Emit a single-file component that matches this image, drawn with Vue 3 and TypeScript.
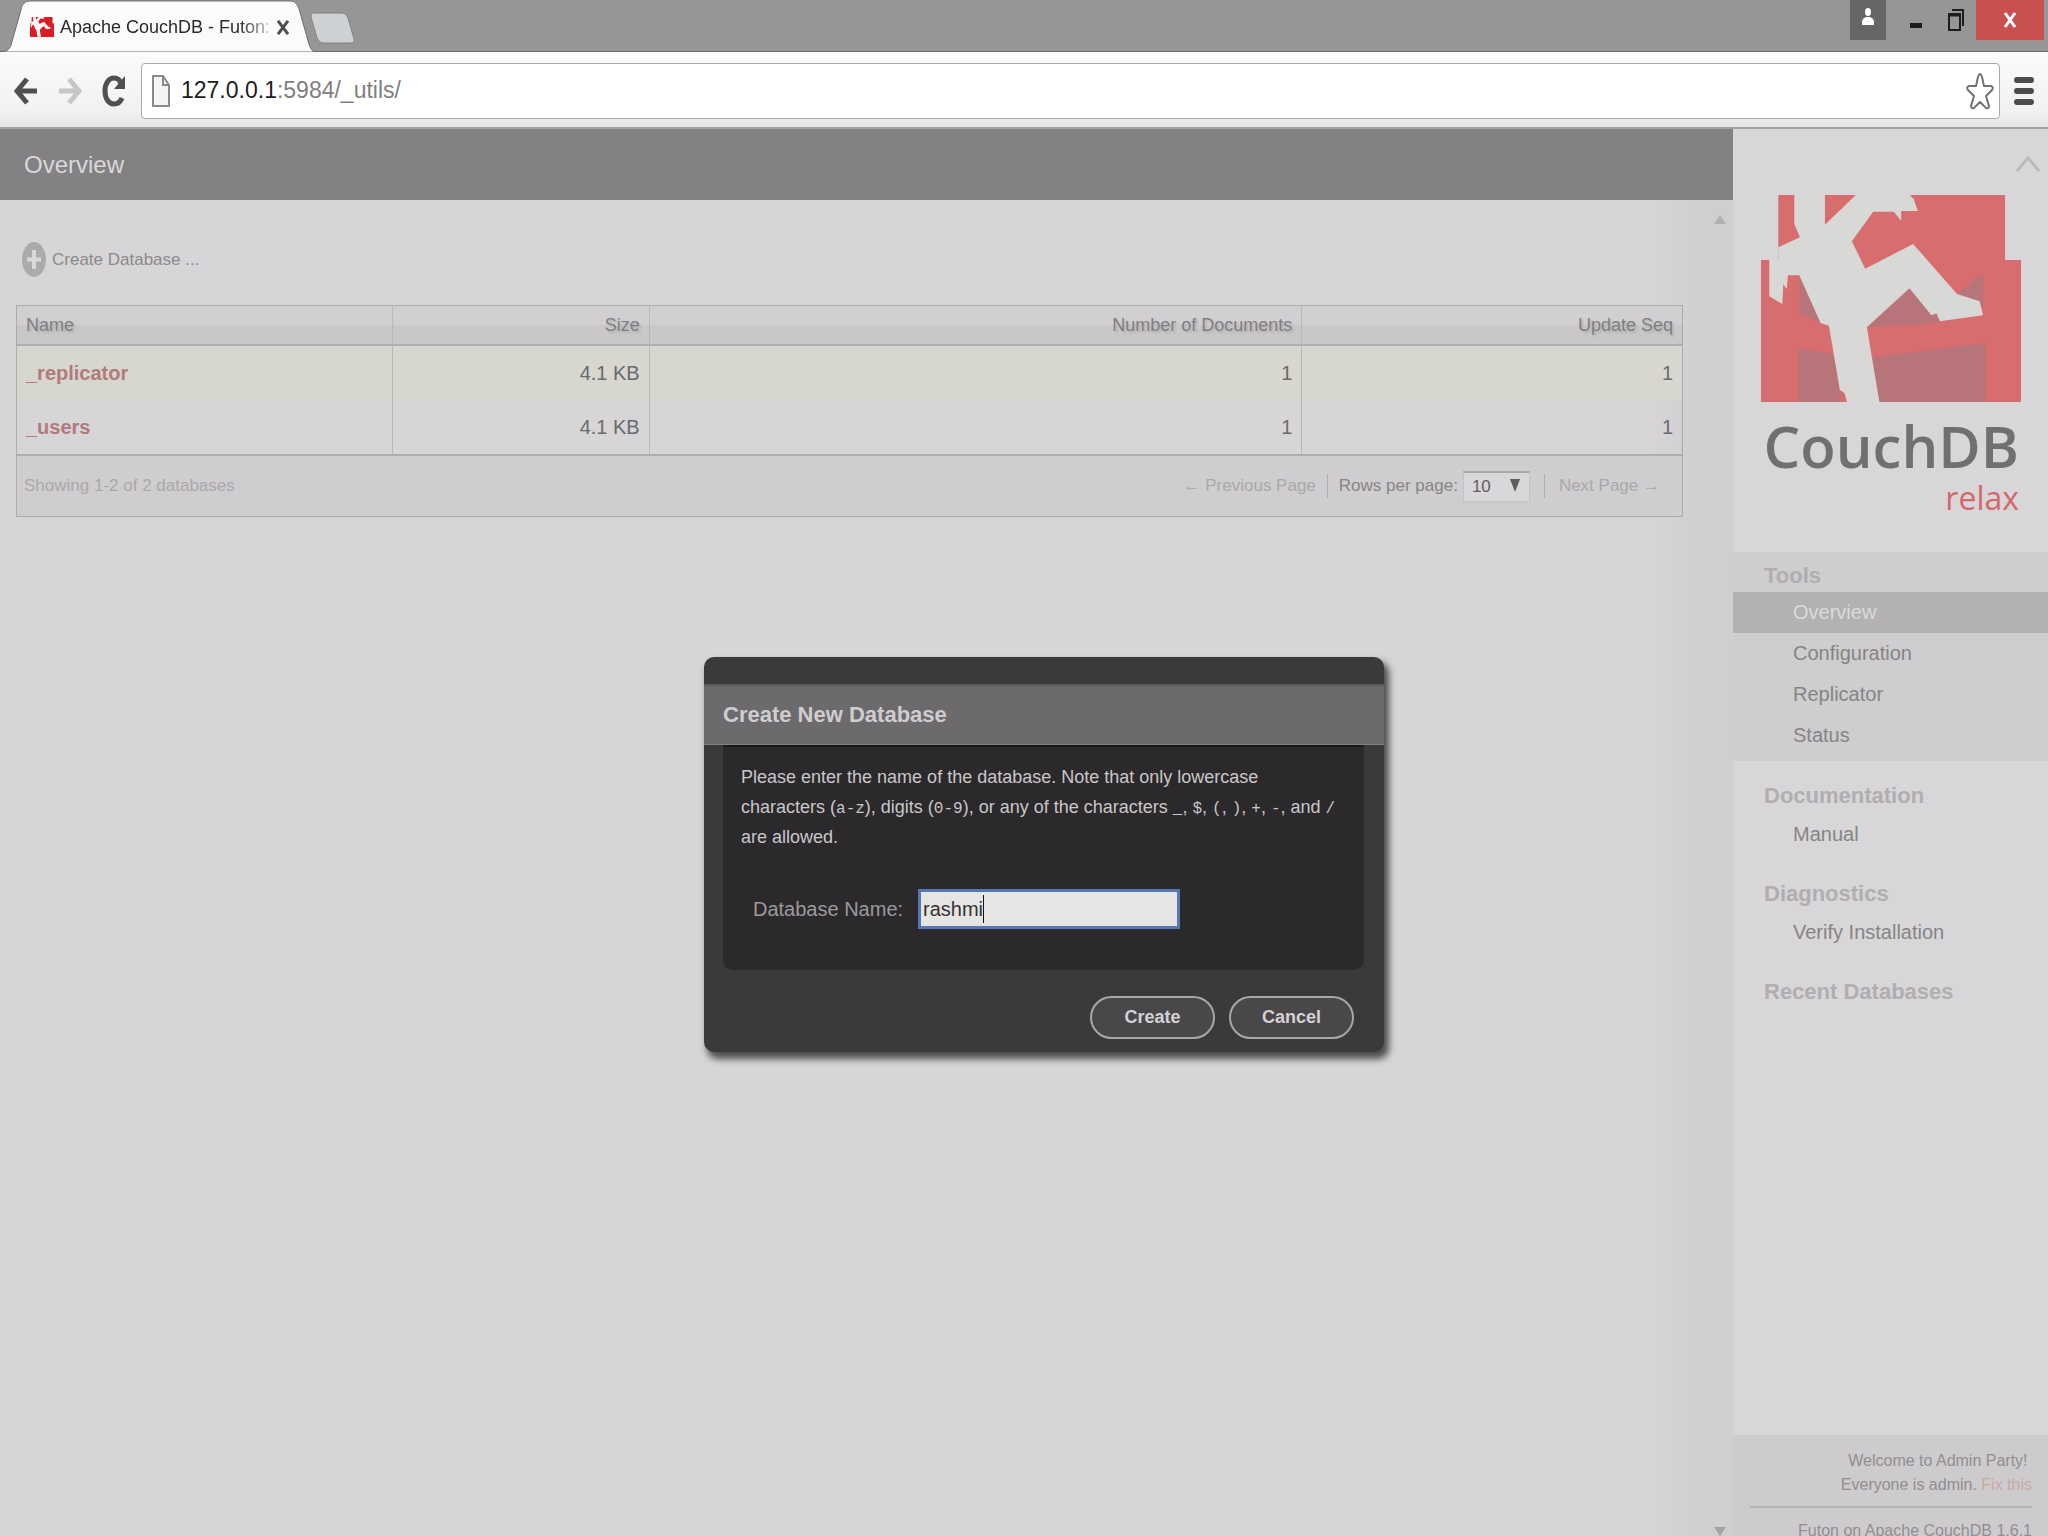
<script setup lang="ts">
import { ref } from 'vue'

interface Database {
  name: string
  size: string
  docs: number
  seq: number
}

interface NavSection {
  title: string
  items: string[]
  tools?: boolean
}

const databases: Database[] = [
  { name: '_replicator', size: '4.1 KB', docs: 1, seq: 1 },
  { name: '_users', size: '4.1 KB', docs: 1, seq: 1 },
]

const sections: NavSection[] = [
  { title: 'Tools', items: ['Overview', 'Configuration', 'Replicator', 'Status'], tools: true },
  { title: 'Documentation', items: ['Manual'] },
  { title: 'Diagnostics', items: ['Verify Installation'] },
  { title: 'Recent Databases', items: [] },
]

const active = 'Overview'
const dbName = ref('rashmi')
const perPage = ref('10')

const blockShape = 'M175 163H856V358H904V784H123V358H175Z'
const figureShape =
  'M223 160V250L240 290L175 320V358H148V467L187 490L190 430L200 446L204 404H238L302 547L327 555L360 748L374 758L382 786H479L441 560L569 443L635 524L650 518L660 542L790 524L780 482L712 460L580 310L436 384L396 302L460 213H522L544 240V211H594L582 176L568 160H411L315 252V160Z'
const couchShape =
  'M238 404L302 547L238 515ZM235 622L340 640L366 784H235ZM569 443L441 560L600 550L665 542ZM712 460L790 396V500ZM450 652L600 632L797 608V784H470Z'
</script>

<template>
  <div class="window">
    <header class="tabstrip">
      <div class="tab">
        <svg class="tab-shape" viewBox="0 0 316 53" preserveAspectRatio="none" aria-hidden="true">
          <path d="M0 53C6 53 9 51 11 46L21 10C22 4 25 1 30 1H290C295 1 297 4 299 9L309 45C311 51 313 53 316 53Z" fill="#fbfbfb" stroke="#6c6c6c" stroke-width="1" />
        </svg>
        <svg class="favicon" viewBox="123 163 781 621" preserveAspectRatio="none" aria-hidden="true">
          <path :d="blockShape" fill="#dc1c24" />
          <path :d="figureShape" fill="#fbfbfb" />
        </svg>
        <span class="tab-title">Apache CouchDB - Futon:</span>
        <button class="tab-close" type="button" aria-label="Close tab">
          <svg viewBox="0 0 12 16" preserveAspectRatio="none"><path d="M1 1L11 15M11 1L1 15" stroke="#4d4d4d" stroke-width="3" /></svg>
        </button>
      </div>
      <button class="new-tab" type="button" aria-label="New tab">
        <svg viewBox="0 0 46 32"><path d="M3 1H31Q36 1 38 6L44 27Q45 31 41 31H13Q9 31 7 26L1 5Q0 1 3 1Z" fill="#cdd1d4" stroke="#808284" /></svg>
      </button>
      <div class="controls">
        <button class="user" type="button" aria-label="User">
          <svg width="14" height="18" viewBox="0 0 14 18"><ellipse cx="7" cy="4" rx="3" ry="4" fill="#fff" /><path d="M1 17V13Q2 10 5 9H9Q12 10 13 13V17Z" fill="#fff" /></svg>
        </button>
        <button class="ctl" type="button" aria-label="Minimize">
          <svg width="14" height="24" viewBox="0 0 14 24"><rect x="1" y="15" width="12" height="5" fill="#1c1c1c" /></svg>
        </button>
        <button class="ctl" type="button" aria-label="Restore">
          <svg width="16" height="24" viewBox="0 0 16 24"><path d="M4 2H15V18" fill="none" stroke="#1c1c1c" stroke-width="2" /><rect x="1" y="6" width="11" height="16" fill="none" stroke="#1c1c1c" stroke-width="2" /><path d="M1 7H12" stroke="#1c1c1c" stroke-width="3" /></svg>
        </button>
        <button class="close" type="button" aria-label="Close">
          <svg width="14" height="16" viewBox="0 0 14 16"><path d="M2 1L12 15M12 1L2 15" stroke="#fff" stroke-width="3" /></svg>
        </button>
      </div>
    </header>

    <div class="toolbar">
      <button class="nav" type="button" aria-label="Back">
        <svg width="24" height="28" viewBox="0 0 24 28"><path d="M13 2L3 14L13 26M3 14H23" fill="none" stroke="#4f4f4f" stroke-width="5" /></svg>
      </button>
      <button class="nav" type="button" aria-label="Forward">
        <svg width="24" height="28" viewBox="0 0 24 28"><path d="M11 2L21 14L11 26M21 14H1" fill="none" stroke="#c6c6c6" stroke-width="5" /></svg>
      </button>
      <button class="nav" type="button" aria-label="Reload">
        <svg width="24" height="32" viewBox="0 0 24 32"><path d="M20 23C18 28 15 29 12 29C7 29 3 24 3 16C3 8 7 3 12 3C15 3 18 5 19 9" fill="none" stroke="#4f4f4f" stroke-width="5" /><path d="M23 1V14H12Z" fill="#4f4f4f" /></svg>
      </button>
      <div class="omnibox">
        <svg width="18" height="32" viewBox="0 0 18 32" aria-hidden="true"><path d="M1 1H11L17 10V31H1Z" fill="#f4f4f4" stroke="#8a8a8a" stroke-width="2" /><path d="M11 1V10H17" fill="none" stroke="#8a8a8a" stroke-width="2" /></svg>
        <span class="url">127.0.0.1<span class="path">:5984/_utils/</span></span>
        <button class="star" type="button" aria-label="Bookmark">
          <svg width="28" height="38" viewBox="0 0 28 38"><path d="M14 2Q15 2 16 5L18 14L25 14Q28 15 26 18L20 24L23 34Q23 37 20 36L14 30L8 36Q5 37 5 34L8 24L2 18Q0 15 3 14L10 14L12 5Q13 2 14 2Z" fill="#fff" stroke="#727272" stroke-width="2" /></svg>
        </button>
      </div>
      <button class="menu" type="button" aria-label="Menu">
        <svg width="20" height="28" viewBox="0 0 20 28"><path d="M3 3H17M3 14H17M3 25H17" stroke="#4c4c4c" stroke-width="6" stroke-linecap="round" /></svg>
      </button>
    </div>

    <div class="page">
      <main class="content">
        <h1>Overview</h1>
        <div class="scroll">
          <div class="body">
            <button class="create" type="button">
              <svg width="24" height="35" viewBox="0 0 24 35" aria-hidden="true"><ellipse cx="12" cy="17.500" rx="12" ry="17.500" fill="#acaaac" /><path d="M12 8V27M5 17.500H19" stroke="#dad8da" stroke-width="4" /></svg>
              Create Database ...
            </button>
            <table>
              <thead>
                <tr>
                  <th class="c-name">Name</th>
                  <th class="c-size">Size</th>
                  <th class="c-docs">Number of Documents</th>
                  <th class="c-seq">Update Seq</th>
                </tr>
              </thead>
              <tbody>
                <tr v-for="db in databases" :key="db.name">
                  <td><a href="#">{{ db.name }}</a></td>
                  <td>{{ db.size }}</td>
                  <td>{{ db.docs }}</td>
                  <td>{{ db.seq }}</td>
                </tr>
              </tbody>
              <tfoot>
                <tr>
                  <td colspan="4">
                    <div class="foot">
                      <span class="showing">Showing 1-2 of 2 databases</span>
                      <span class="off">← Previous Page</span>
                      <span class="bar"></span>
                      <label for="per-page">Rows per page:</label>
                      <span class="select">
                        <select id="per-page" v-model="perPage">
                          <option>10</option>
                          <option>25</option>
                          <option>50</option>
                        </select>
                        <svg width="10" height="13" viewBox="0 0 10 13" aria-hidden="true"><path d="M0 0H10L5 13Z" fill="#5e5c5e" /></svg>
                      </span>
                      <span class="bar wide"></span>
                      <span class="off">Next Page →</span>
                    </div>
                  </td>
                </tr>
              </tfoot>
            </table>
          </div>
          <div class="scrollbar" aria-hidden="true">
            <svg width="12" height="9" viewBox="0 0 12 9"><path d="M0 9L6 0L12 9Z" fill="#b3b1b3" /></svg>
            <svg width="12" height="9" viewBox="0 0 12 9"><path d="M0 0L6 9L12 0Z" fill="#a5a3a5" /></svg>
          </div>
        </div>
      </main>

      <aside class="sidebar">
        <button class="collapse" type="button" aria-label="Collapse sidebar">
          <svg width="24" height="18" viewBox="0 0 24 18"><path d="M1 16L12 3L23 16" fill="none" stroke="#bcbabc" stroke-width="3" /></svg>
        </button>
        <a class="logo" href="#" aria-label="CouchDB relax">
          <svg class="logo-art" viewBox="123 163 781 621" preserveAspectRatio="none" aria-hidden="true">
            <path :d="blockShape" fill="#d76d6e" />
            <path :d="couchShape" fill="#b87579" />
            <path :d="figureShape" fill="#d8d8d7" />
          </svg>
          <span class="brand">CouchDB</span>
          <span class="relax">relax</span>
        </a>
        <nav>
          <section v-for="s in sections" :key="s.title" :class="{ tools: s.tools }">
            <h2>{{ s.title }}</h2>
            <ul v-if="s.items.length">
              <li v-for="item in s.items" :key="item" :class="{ active: item === active }">
                <a href="#">{{ item }}</a>
              </li>
            </ul>
          </section>
        </nav>
        <footer>
          <p class="admin">Welcome to Admin Party!&nbsp;<br />Everyone is admin. <a href="#">Fix this</a></p>
          <p class="version">Futon on Apache CouchDB 1.6.1</p>
        </footer>
      </aside>

      <form class="dialog" role="dialog" aria-labelledby="dlg-title" @submit.prevent>
        <h2 id="dlg-title">Create New Database</h2>
        <div class="panel">
          <p>
            Please enter the name of the database. Note that only lowercase characters (<code>a-z</code>), digits
            (<code>0-9</code>), or any of the characters <code>_</code>, <code>$</code>, <code>(</code>,
            <code>)</code>, <code>+</code>, <code>-</code>, and <code>/</code> are allowed.
          </p>
          <div class="field">
            <label for="db-name">Database Name:</label>
            <span class="box"><input id="db-name" v-model="dbName" type="text" /><i class="caret"></i></span>
          </div>
        </div>
        <div class="actions">
          <button type="submit">Create</button>
          <button type="button">Cancel</button>
        </div>
      </form>
    </div>
  </div>
</template>

<style>
body {
  margin: 0;
  overflow: hidden;
}
</style>

<style scoped>
.window {
  height: 100vh;
  display: flex;
  flex-direction: column;
  overflow: hidden;
  font-family: 'Liberation Sans', Arial, sans-serif;
  font-size: 18px;
  color: #6b696b;
}
.window *,
.window *::before {
  box-sizing: border-box;
}
button,
input,
select {
  font: inherit;
  color: inherit;
  margin: 0;
  padding: 0;
  border: 0;
  background: none;
}
h1,
h2,
p,
ul {
  margin: 0;
  padding: 0;
}
a {
  color: inherit;
  text-decoration: none;
}
svg {
  display: block;
  flex: none;
}

/* browser frame */
.tabstrip {
  display: flex;
  flex: none;
  height: 52px;
  background: #969696;
  border-bottom: 1px solid #6c6c6c;
}
.tab {
  position: relative;
  display: flex;
  align-items: center;
  width: 316px;
  height: 52px;
  padding: 2px 0 0 30px;
}
.tab-shape {
  position: absolute;
  inset: 0;
  width: 316px;
  height: 52px;
}
.favicon {
  position: relative;
  width: 24px;
  height: 20px;
}
.tab-title {
  position: relative;
  width: 208px;
  margin-left: 6px;
  white-space: nowrap;
  color: #2b2b2b;
  mask-image: linear-gradient(to right, #000 86%, rgba(0, 0, 0, 0.3));
}
.tab-close {
  position: relative;
  margin-left: 9px;
}
.tab-close svg {
  width: 12px;
  height: 15px;
}
.new-tab {
  align-self: flex-start;
  margin: 12px 0 0 -6px;
}
.new-tab svg {
  width: 46px;
  height: 32px;
}
.controls {
  display: flex;
  align-items: flex-start;
  margin-left: auto;
  padding-right: 4px;
}
.controls button {
  display: flex;
  align-items: center;
  justify-content: center;
  height: 40px;
}
.controls .user {
  width: 36px;
  margin-right: 10px;
  padding-bottom: 6px;
  background: #666;
}
.controls .ctl {
  width: 40px;
}
.controls .close {
  width: 68px;
  background: #c8504f;
}
.toolbar {
  display: flex;
  flex: none;
  align-items: center;
  height: 77px;
  padding: 2px 14px 0 14px;
  background: linear-gradient(#fbfbfb, #f1f1f1 80%, #e4e4e4);
  border-bottom: 2px solid #a3a3a3;
}
.nav {
  width: 24px;
  margin-right: 20px;
}
.omnibox {
  display: flex;
  flex: 1;
  align-items: center;
  height: 56px;
  margin: 0 14px 0 -5px;
  padding: 0 5px 0 10px;
  background: #fff;
  border: 1px solid #a8aaa9;
  border-radius: 4px;
}
.url {
  flex: 1;
  margin-left: 11px;
  font-size: 23px;
  color: #1d1d1d;
}
.path {
  color: #7f7f7f;
}

/* page */
.page {
  position: relative;
  display: flex;
  flex: 1;
  min-height: 0;
  background: #d7d5d7;
}
.content {
  display: flex;
  flex: 1;
  flex-direction: column;
  min-width: 0;
}
h1 {
  height: 71px;
  padding-left: 24px;
  font-size: 24px;
  font-weight: 400;
  line-height: 71px;
  color: #dad8da;
  background: #838183;
}
.scroll {
  display: flex;
  flex: 1;
  background: linear-gradient(to right, #d7d5d7 calc(100% - 90px), #d0ced0 calc(100% - 26px));
}
.body {
  flex: 1;
  padding: 42px 24px 0 16px;
}
.create {
  display: flex;
  align-items: center;
  gap: 6px;
  height: 35px;
  margin-left: 6px;
  font-size: 17px;
  color: #8c8a8c;
}
table {
  width: 100%;
  margin-top: 28px;
  table-layout: fixed;
  border: 1px solid #adabad;
  border-spacing: 0;
}
.c-name {
  width: 22.6%;
}
.c-size {
  width: 15.4%;
}
.c-docs {
  width: 39.2%;
}
.c-seq {
  width: 22.8%;
}
th,
td {
  padding: 0 9px;
  text-align: right;
  border-right: 1px solid #bab8ba;
}
th:first-child,
td:first-child {
  text-align: left;
}
th:last-child,
td:last-child {
  border-right: 0;
}
th {
  height: 40px;
  font-weight: 400;
  color: #807e80;
  text-shadow: 2px 2px 2px #b3b1b3;
  background: linear-gradient(#d1cfd1 50%, #c9c7c9 50%);
  border-bottom: 2px solid #b0aeb0;
}
tbody td {
  height: 54px;
  font-size: 20px;
}
tbody tr:first-child {
  background: #d7d6cf;
}
tbody a {
  font-weight: 700;
  color: #b17b7b;
}
tfoot td {
  height: 62px;
  padding: 0 22px 0 7px;
  background: #cfcdcf;
  border-top: 2px solid #b0aeb0;
}
.foot {
  display: flex;
  align-items: center;
  font-size: 17px;
  color: #878587;
}
.showing,
.off {
  color: #aaa8aa;
}
.showing {
  margin-right: auto;
}
.bar {
  width: 1px;
  height: 24px;
  margin: 0 11px;
  background: #b0aeb0;
}
.bar.wide {
  margin: 0 14px;
}
.select {
  position: relative;
  margin-left: 5px;
}
.select svg {
  position: absolute;
  top: 8px;
  right: 10px;
}
select {
  display: block;
  width: 67px;
  height: 31px;
  padding-left: 8px;
  appearance: none;
  font-size: 17px;
  color: #5e5c5e;
  background: #d9d7d9;
  border: 1px solid #c4c2c4;
  border-top: 2px solid #a9a7a9;
  border-radius: 0;
}
.scrollbar {
  display: flex;
  flex-direction: column;
  justify-content: space-between;
  width: 26px;
  padding: 15px 0 0 7px;
}

/* sidebar */
.sidebar {
  display: flex;
  flex-direction: column;
  width: 315px;
  background: #d8d6d8;
}
.collapse {
  align-self: flex-end;
  height: 18px;
  margin: 26px 8px 0 0;
}
.logo {
  display: flex;
  flex-direction: column;
  align-items: flex-end;
  height: 379px;
  padding: 22px 27px 0 28px;
}
.logo-art {
  width: 100%;
  height: 207px;
}
.brand {
  margin: 8px 2px 0 0;
  font-family: 'Open Sans', sans-serif;
  font-size: 58px;
  font-weight: 600;
  line-height: 72px;
  color: #717071;
}
.relax {
  margin-right: 2px;
  font-family: 'Open Sans', sans-serif;
  font-size: 32px;
  line-height: 32px;
  color: #d4686b;
}
section {
  padding-bottom: 22px;
}
section.tools {
  padding: 8px 0 5px;
  margin-bottom: 19px;
  background: #cfcdcf;
}
h2 {
  font-size: 22px;
  font-weight: 700;
  line-height: 32px;
}
nav h2 {
  padding-left: 31px;
  color: #b0aeb0;
}
ul {
  list-style: none;
}
li {
  padding-left: 60px;
  font-size: 20px;
  line-height: 44px;
  color: #868486;
}
.tools li {
  line-height: 41px;
}
.tools li.active {
  color: #dcdadc;
  background: #b3b1b3;
}
footer {
  height: 101px;
  margin-top: auto;
  padding: 14px 16px 0 17px;
  overflow: hidden;
  font-size: 16px;
  line-height: 24px;
  text-align: right;
  color: #908e90;
  background: #cecbce;
}
.admin {
  padding-bottom: 9px;
  border-bottom: 2px solid #b5b3b5;
}
.admin a {
  color: #caa9a6;
}
.version {
  padding-top: 11px;
  white-space: nowrap;
}

/* dialog */
.dialog {
  position: absolute;
  top: 528px;
  left: calc(50% - 320px);
  width: 680px;
  padding: 27px 0 13px;
  color: #c9c7c9;
  background: #3c393c;
  border-radius: 10px;
  box-shadow: 4px 6px 7px 1px #4f4d4f;
}
.dialog h2 {
  height: 61px;
  padding-left: 19px;
  line-height: 58px;
  color: #cfcdcf;
  background: #6c6a6c;
  border-top: 2px solid #5b595b;
  border-bottom: 1px solid #828082;
}
.panel {
  height: 225px;
  margin: 0 20px 0 19px;
  padding: 15px 20px 0 18px;
  background: #2c292c;
  border-top: 2px solid #1b191b;
  border-radius: 0 0 10px 10px;
}
.panel p {
  line-height: 30px;
}
code {
  font-family: 'Liberation Mono', monospace;
  font-size: 16px;
  line-height: 1;
}
.field {
  display: flex;
  align-items: center;
  margin: 37px 0 0 12px;
}
.field label {
  width: 165px;
  font-size: 20px;
  color: #9c9a9c;
}
.box {
  display: flex;
  align-items: center;
  width: 262px;
  height: 40px;
  padding-left: 2px;
  background: #e6e5e4;
  border: 3px solid #5478b4;
}
.box input {
  field-sizing: content;
  font-size: 20px;
  color: #333;
  caret-color: transparent;
  outline: 0;
}
.caret {
  width: 1px;
  height: 28px;
  background: #111;
}
.actions {
  display: flex;
  justify-content: flex-end;
  gap: 14px;
  padding: 26px 30px 0 0;
}
.actions button {
  width: 125px;
  height: 43px;
  font-weight: 700;
  color: #d4d2d4;
  background: #4a474a;
  border: 2px solid #a8a6a8;
  border-radius: 22px;
}
</style>
